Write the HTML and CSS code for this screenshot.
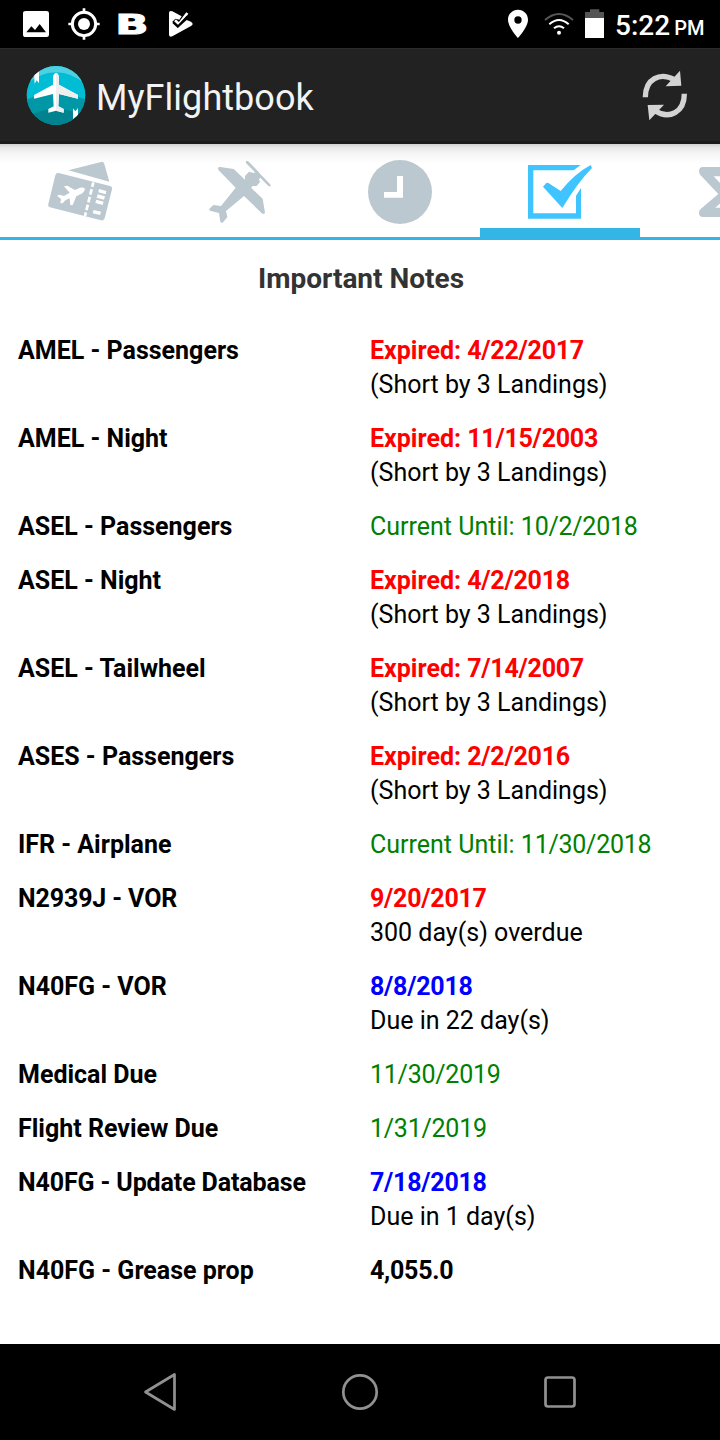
FILE: index.html
```html
<!DOCTYPE html>
<html lang="en">
<head>
<meta charset="utf-8">
<title>MyFlightbook</title>
<link rel="stylesheet" href="styles.css">
</head>
<body>
<div class="screen">
  <header class="status">
    <svg class="status-left" viewBox="0 0 660 144" fill="#fff">
      <path fill-rule="evenodd" d="M77 33H140Q147 33 147 40V104Q147 111 140 111H77Q69 111 69 104V40Q69 33 77 33ZM79 97H138L119 72L105 90L94 79Z"/>
      <circle cx="252" cy="72" r="35" fill="none" stroke="#fff" stroke-width="9"/>
      <circle cx="252" cy="72" r="18"/>
      <path d="M248 25H256V40H248ZM248 104H256V119H248ZM205 68H220V76H205ZM284 68H299V76H284Z"/>
      <text class="brand" x="346" y="101" textLength="100" lengthAdjust="spacingAndGlyphs">B</text>
      <path d="M507 38Q508 30 517 34L545 49L538 59L526 56L517 65L534 83L560 60L573 65Q583 72 573 78L517 109Q508 113 507 104Z"/>
      <path d="M525 61L537 72L562 39" fill="none" stroke="#fff" stroke-width="8"/>
      <path d="M519 67L533 80L562 49" fill="none" stroke="#000" stroke-width="6"/>
    </svg>
    <div class="status-right">
      <svg class="signals" viewBox="45 0 300 144" fill="#fff">
        <path fill-rule="evenodd" d="M84 29C67 29 54 42 54 59C54 81 84 114 84 114S114 81 114 59C114 42 101 29 84 29ZM84 49A11 11 0 1 1 84 71A11 11 0 1 1 84 49Z"/>
        <g fill="none" stroke-width="6"><path stroke="#555" d="M165 60Q207 24 249 60"/><path stroke="#fff" d="M178 73Q207 47 236 73M192 85Q207 72 222 85"/></g>
        <circle cx="207" cy="98" r="6"/>
        <path fill="#555" d="M285 36H300V28H328V36H342V54H285Z"/>
        <path d="M285 54H342V114H285Z"/>
      </svg>
      <span class="clock">5:22</span><span class="meridiem">PM</span>
    </div>
  </header>
  <div class="appbar">
    <svg class="logo" viewBox="48 46 180 182">
      <defs><clipPath id="disc"><circle cx="138" cy="137" r="88"/></clipPath></defs>
      <g clip-path="url(#disc)">
        <path fill="#00bcd4" d="M48 46H228V228H48Z"/>
        <path fill="#4dd0e1" d="M48 46H228V105Q185 68 138 68T48 105Z"/>
        <path fill="#0097a7" d="M48 150Q90 132 138 132T228 150V228H48Z"/>
        <path fill="#00838f" d="M48 204Q90 178 138 178T228 204V228H48Z"/>
        <path fill="#fff" d="M72 70L87 64V101L80 92L74 102ZM189 176L196 185L204 175V205L189 209Z"/>
      </g>
      <path fill="#fff" d="M138 69Q129 73 129 84V105L72 136V147L129 133L131 170L115 178V189L138 183L161 189V178L145 170L147 133L204 147V136L147 105V84Q147 73 138 69Z"/>
      <path fill="#eee" d="M138 69Q147 73 147 84V105L204 136V147L147 133L145 170L161 178V189L138 183Z"/>
    </svg>
    <h1 class="app-title">MyFlightbook</h1>
    <svg class="refresh" viewBox="60 55 150 165">
      <g fill="none" stroke="#d3d3d3" stroke-width="16"><path d="M76 143C76 87 120 67 163 90"/><path d="M193 132C193 188 148 210 106 184"/></g>
      <path fill="#d3d3d3" d="M180 63L184 108L137 110ZM83 166L132 165L88 212Z"/>
    </svg>
  </div>
  <nav class="tabs">
    <div class="tab"><svg class="tab-icon" viewBox="0 -3 300 288">
      <path fill="#bcc8cf" d="M115 76L213 51Q220 49 223 57L238 110Z"/>
      <path fill="#bcc8cf" d="M86 84L240 123Q248 125 246 133L224 220Q221 228 213 226L60 187Q53 185 55 177L76 91Q78 83 86 84Z"/>
      <path fill="none" stroke="#fff" stroke-width="8" stroke-dasharray="17 7" stroke-dashoffset="3" d="M190 112L165 213"/>
      <path fill="#fff" d="M207 132L229 138L227 148L205 142ZM203 148L225 154L222 164L200 158ZM199 164L221 170L218 180L196 174ZM191 195L213 200L210 210L188 205Z"/>
      <path fill="#fff" d="M165 131Q161 126 150 128L135 135L112 122L102 124L119 143L102 153L89 149L81 152L93 162L91 174L98 175L106 166L119 160L121 181L128 180L139 154L157 145Q165 137 165 131Z"/>
    </svg></div>
    <div class="tab"><svg class="tab-icon" viewBox="0 -3 300 288">
      <path fill="#bcc8cf" d="M84 70Q85 65 91 66L131 72L165 104V93L177 80L191 84L197 81L169 52Q166 49 170 48Q174 48 177 51L206 81L210 87L238 117Q244 122 240 124Q236 124 232 119L211 98L207 103L210 111L200 123H187L184 129L218 161L225 203Q222 208 217 206L162 153L108 198L112 217L97 234L91 231L87 204L60 197Q56 194 60 190L70 180L93 183L137 128L86 76Z"/>
      <path stroke="#bcc8cf" stroke-width="7" stroke-linecap="round" d="M171 52L238 120"/>
    </svg></div>
    <div class="tab"><svg class="tab-icon" viewBox="0 -3 300 288">
      <circle cx="150" cy="141" r="96" fill="#bcc8cf"/><path fill="#fff" d="M141 93H159V158H102V141H141Z"/>
    </svg></div>
    <div class="tab selected"><svg class="check-icon" viewBox="0 -3 360 288" fill="#40c4ff">
      <path d="M84 60H242L221 76H100V205H228V152L243 129V221H84Z"/>
      <path d="M129 125L139 114Q145 112 151 118L182 138Q225 85 272 60L276 69Q235 110 187 189Z"/>
    </svg></div>
    <div class="tab"><svg class="tab-icon" viewBox="510 -3 300 288">
      <path fill="#bcc8cf" d="M609 66H720V94H641L692 147L646 188H720V216H609Q597 216 597 203Q597 196 602 192L655 147L601 90Q597 86 597 79Q597 66 609 66Z"/>
    </svg></div>
  </nav>
  <main class="content">
    <h2 class="heading">Important Notes</h2>
    <dl class="notes">
      <dt>AMEL - Passengers</dt><dd><b class="expired">Expired: <i>4/22/2017</i></b><span>(Short by 3 Landings)</span></dd>
      <dt>AMEL - Night</dt><dd><b class="expired">Expired: <i>11/15/2003</i></b><span>(Short by 3 Landings)</span></dd>
      <dt>ASEL - Passengers</dt><dd><span class="current">Current Until: <i>10/2/2018</i></span></dd>
      <dt>ASEL - Night</dt><dd><b class="expired">Expired: <i>4/2/2018</i></b><span>(Short by 3 Landings)</span></dd>
      <dt>ASEL - Tailwheel</dt><dd><b class="expired">Expired: <i>7/14/2007</i></b><span>(Short by 3 Landings)</span></dd>
      <dt>ASES - Passengers</dt><dd><b class="expired">Expired: <i>2/2/2016</i></b><span>(Short by 3 Landings)</span></dd>
      <dt>IFR - Airplane</dt><dd><span class="current">Current Until: <i>11/30/2018</i></span></dd>
      <dt class="tight">N2939J - VOR</dt><dd><b class="expired"><i>9/20/2017</i></b><span>300 day(s) overdue</span></dd>
      <dt>N40FG - VOR</dt><dd><b class="soon"><i>8/8/2018</i></b><span>Due in 22 day(s)</span></dd>
      <dt>Medical Due</dt><dd><span class="current"><i>11/30/2019</i></span></dd>
      <dt>Flight Review Due</dt><dd><span class="current"><i>1/31/2019</i></span></dd>
      <dt class="tight">N40FG - Update Database</dt><dd><b class="soon"><i>7/18/2018</i></b><span>Due in 1 day(s)</span></dd>
      <dt>N40FG - Grease prop</dt><dd><b><i>4,055.0</i></b></dd>
    </dl>
  </main>
  <footer class="navbar">
    <svg viewBox="0 0 40 40"><path d="M5.5 20L34.5 2.5V37.5Z"/></svg>
    <svg viewBox="0 0 40 40"><circle cx="20" cy="20" r="16.7"/></svg>
    <svg viewBox="0 0 40 40"><rect x="5.5" y="5.5" width="29" height="29" rx="2.5"/></svg>
  </footer>
</div>
</body>
</html>
```
FILE: styles.css
```css
* { box-sizing: border-box; }
body { margin: 0; font-family: Roboto, sans-serif; background: #fff; color: #000; }
svg { display: block; flex: none; }
.screen { width: 720px; height: 1440px; display: flex; flex-direction: column; overflow: hidden; }
.status { height: 48px; background: #000; display: flex; justify-content: space-between; color: #fff; }
.status-left { width: 220px; height: 48px; }
.brand { font: bold 82px "DejaVu Sans", sans-serif; stroke: #fff; stroke-width: 3px; }
.status-right { display: flex; align-items: baseline; width: 215px; }
.signals { width: 100px; height: 48px; align-self: flex-start; }
.clock { font-size: 28px; line-height: 52px; font-weight: 500; margin-left: 10px; }
.meridiem { font-size: 20px; font-weight: 500; margin-left: 4px; }
.appbar { height: 96px; background: #222; border-top: 1px solid #2c2c2c; border-bottom: 3px solid #1a1a1a; display: flex; align-items: center; padding: 0 30px 0 26px; }
.logo { width: 60px; height: 60.67px; margin-top: 1px; }
.app-title { flex: 1; margin: 6px 0 0 10px; font-size: 36px; font-weight: 400; color: #f3f3f3; line-height: 44px; letter-spacing: 0.05px; }
.refresh { width: 50px; height: 55px; margin-top: 1px; }
.tabs { height: 96px; display: flex; overflow: hidden; background: linear-gradient(#cfcfcf 0, #e4e4e4 3px, #f5f5f5 9px, #fff 20px); border-bottom: 3px solid #33b5e5; }
.tab { width: 160px; height: 96px; flex: none; display: flex; justify-content: center; }
.tab-icon { width: 100px; height: 96px; }
.check-icon { width: 120px; height: 96px; }
.selected { background: linear-gradient(#33b5e5, #33b5e5) 0 84px / 100% 12px no-repeat; }
.content { flex: 1; padding: 21px 18px 0; }
.heading { margin: 0 0 37px; padding-left: 2px; font-size: 28px; line-height: 36px; text-align: center; color: #333; }
.notes { margin: 0; display: grid; grid-template-columns: 352px 1fr; row-gap: 20px; font-size: 25px; line-height: 34px; }
.notes dt { font-weight: 700; }
.notes .tight { letter-spacing: -0.13px; }
.notes dd { margin: 0; display: flex; flex-direction: column; }
.notes i { font-style: normal; letter-spacing: -0.25px; }
.expired { color: #f00; }
.current { color: #008000; }
.soon { color: #00f; }
.navbar { height: 96px; background: #000; display: flex; align-items: center; justify-content: space-between; padding: 0 140px; }
.navbar svg { width: 40px; height: 40px; fill: none; stroke: #919191; stroke-width: 2.7; stroke-linejoin: round; }
```
